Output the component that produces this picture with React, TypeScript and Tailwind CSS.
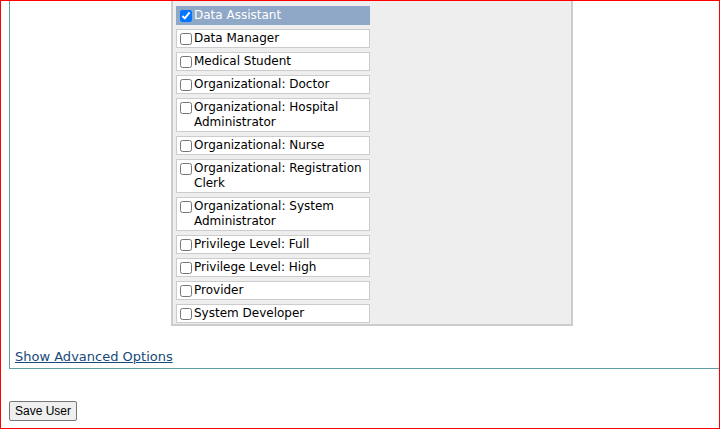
import React from 'react';

const roles = [
    { label: 'Data Assistant', checked: true },
    { label: 'Data Manager' },
    { label: 'Medical Student' },
    { label: 'Organizational: Doctor' },
    { label: 'Organizational: Hospital Administrator' },
    { label: 'Organizational: Nurse' },
    { label: 'Organizational: Registration Clerk' },
    { label: 'Organizational: System Administrator' },
    { label: 'Privilege Level: Full' },
    { label: 'Privilege Level: High' },
    { label: 'Provider' },
    { label: 'System Developer' },
];

function RoleRow({ label, checked }: { label: string; checked?: boolean }) {
    return (
        <label
            className={
                'flex items-start w-[194px] border py-[1px] ' +
                (checked ? 'bg-[#8fa8c7] border-[#8fa8c7] text-white' : 'bg-white border-[#cccccc] text-black')
            }
        >
            <input
                type="checkbox"
                defaultChecked={checked}
                className="m-0 mt-[2px] ml-[3px] mr-[2px] w-[12px] h-[12px] shrink-0"
            />
            <span className="leading-[15px]">{label}</span>
        </label>
    );
}

export default function App() {
    return (
        <div className="h-[429px] border border-[#ff0000] overflow-hidden bg-white font-['DejaVu_Sans',Verdana,sans-serif]">
            <div className="ml-[8px] border-l border-b border-l-[#5f9ea0] border-b-[#5f9ea0] pb-[2px]">
                <div className="ml-[161px] w-[402px] bg-[#eeeeee] border-2 border-t-0 border-[#cccccc] pt-[5px] pb-[1px] px-[3px] text-[12px]">
                    <div className="flex flex-col gap-[4px]">
                        {roles.map((r) => (
                            <RoleRow key={r.label} label={r.label} checked={r.checked} />
                        ))}
                    </div>
                </div>
                <div className="pl-[5px] mt-[22px] text-[13px] leading-[18px]">
                    <a href="#" className="text-[#17497a] underline">
                        Show Advanced Options
                    </a>
                </div>
            </div>
            <div className="flex ml-[8px] mt-[32px]">
                <button className="font-['Liberation_Sans',Arial,sans-serif] text-[12px] leading-[16px] px-[5px] py-[1px] bg-[#efefef] border border-[#767676] rounded-[2px] text-black">
                    Save User
                </button>
            </div>
        </div>
    );
}
